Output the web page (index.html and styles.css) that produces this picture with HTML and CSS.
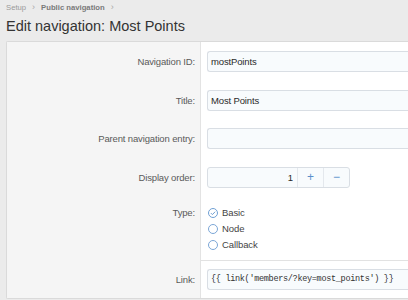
FILE: index.html
```html
<!DOCTYPE html>
<html lang="en">

<head>
    <meta charset="UTF-8">
    <meta name="viewport" content="width=device-width, initial-scale=1.0">
    <title>Edit navigation: Most Points</title>
    <link rel="stylesheet" href="styles.css">
</head>

<body>
    <div class="breadcrumb">
        <a href="#">Setup</a>
        <span class="chevron">&rsaquo;</span>
        <a href="#" class="current">Public navigation</a>
        <span class="chevron">&rsaquo;</span>
    </div>
    <h1>Edit navigation: Most Points</h1>

    <div class="block">
        <div class="row">
            <div class="label">Navigation ID:</div>
            <div class="field"><input class="input" type="text" value="mostPoints"></div>
        </div>
        <div class="row">
            <div class="label">Title:</div>
            <div class="field"><input class="input" type="text" value="Most Points"></div>
        </div>
        <div class="row">
            <div class="label">Parent navigation entry:</div>
            <div class="field"><div class="input select"></div></div>
        </div>
        <div class="row">
            <div class="label">Display order:</div>
            <div class="field">
                <div class="spinbox">
                    <input class="spin-value" type="text" value="1">
                    <button class="spin-btn">+</button>
                    <button class="spin-btn">&minus;</button>
                </div>
            </div>
        </div>
        <div class="row">
            <div class="label label-list">Type:</div>
            <div class="field field-list">
                <ul class="radios">
                    <li>
                        <svg class="radio" viewBox="0 0 10 10" width="10" height="10">
                            <circle cx="5" cy="5" r="4.5" fill="none" stroke="#6f9fd3" stroke-width="1"/>
                            <path d="M2.9 5.1 L4.4 6.6 L7.2 3.7" fill="none" stroke="#6f9fd3" stroke-width="1"/>
                        </svg>
                        Basic
                    </li>
                    <li>
                        <svg class="radio" viewBox="0 0 10 10" width="10" height="10">
                            <circle cx="5" cy="5" r="4.5" fill="none" stroke="#7ba6d6" stroke-width="1"/>
                        </svg>
                        Node
                    </li>
                    <li>
                        <svg class="radio" viewBox="0 0 10 10" width="10" height="10">
                            <circle cx="5" cy="5" r="4.5" fill="none" stroke="#7ba6d6" stroke-width="1"/>
                        </svg>
                        Callback
                    </li>
                </ul>
            </div>
        </div>
        <div class="row separated">
            <div class="label">Link:</div>
            <div class="field"><input class="input code" type="text" value="{{ link('members/?key=most_points') }}"></div>
        </div>
    </div>
</body>

</html>
```

FILE: styles.css
```css
* {
    box-sizing: border-box;
    margin: 0;
    padding: 0;
}

body {
    font-family: 'Liberation Sans', Arial, sans-serif;
    background-color: #ebebeb;
    color: #222;
    overflow: hidden;
    padding-left: 6px;
}

.breadcrumb {
    display: flex;
    align-items: center;
    gap: 5px;
    height: 14px;
    font-size: 7.7px;
}

.breadcrumb a {
    color: #9a9a9a;
    text-decoration: none;
}

.breadcrumb a.current {
    color: #7a7a7a;
    font-weight: bold;
}

.chevron {
    color: #a8a8a8;
    font-size: 9px;
    padding: 0 1px;
}

h1 {
    font-size: 14.5px;
    font-weight: normal;
    line-height: 20px;
    color: #333;
    margin-top: 2px;
    margin-bottom: 5px;
}

.block {
    border: 1px solid #dadada;
    border-right: none;
    border-radius: 2px 0 0 2px;
    background: #fff;
}

.row {
    display: grid;
    grid-template-columns: 194px 1fr;
}

.label {
    background: #f5f5f5;
    border-right: 1px solid #e3e3e3;
    padding: 9px 5px 8.7px 0;
    text-align: right;
    font-size: 9.5px;
    letter-spacing: -0.15px;
    line-height: 21px;
    color: #5a5a5a;
}

.field {
    padding: 9px 0 8.7px 6px;
}

.input {
    display: block;
    width: 100%;
    height: 21px;
    border: 1px solid #d9dee4;
    border-right: none;
    border-radius: 3px 0 0 3px;
    background: #f8fbfd;
    padding: 0 3px;
    font-family: 'Liberation Sans', Arial, sans-serif;
    font-size: 9.5px;
    letter-spacing: -0.15px;
    color: #2a2a2a;
    outline: none;
}

.input.code {
    font-family: 'Liberation Mono', 'Courier New', monospace;
    font-size: 8.5px;
    letter-spacing: -0.3px;
    color: #333;
}

.spinbox {
    display: flex;
    width: 143px;
    height: 21px;
    border: 1px solid #d9dee4;
    border-radius: 3px;
    background: #f8fbfd;
    overflow: hidden;
}

.spin-value {
    width: 89px;
    border: none;
    background: transparent;
    text-align: right;
    padding-right: 4px;
    font-family: 'Liberation Sans', Arial, sans-serif;
    font-size: 9.5px;
    color: #2a2a2a;
    outline: none;
}

.spin-btn {
    flex: 1;
    border: none;
    border-left: 1px solid #e4e8ed;
    background: transparent;
    color: #5a8fcb;
    font-family: 'Liberation Sans', Arial, sans-serif;
    font-size: 12px;
    line-height: 19px;
}

.label-list {
    padding-top: 8px;
    padding-bottom: 7px;
    line-height: 16px;
}

.field-list {
    padding-top: 8px;
    padding-bottom: 7px;
}

.radios {
    list-style: none;
}

.radios li {
    display: flex;
    align-items: center;
    gap: 4px;
    height: 16px;
    font-size: 9.5px;
    letter-spacing: -0.1px;
    color: #444;
    padding-left: 1px;
}

.radio {
    flex-shrink: 0;
}

.separated .field {
    border-top: 1px solid #e2e2e2;
    padding-top: 8px;
}
```
